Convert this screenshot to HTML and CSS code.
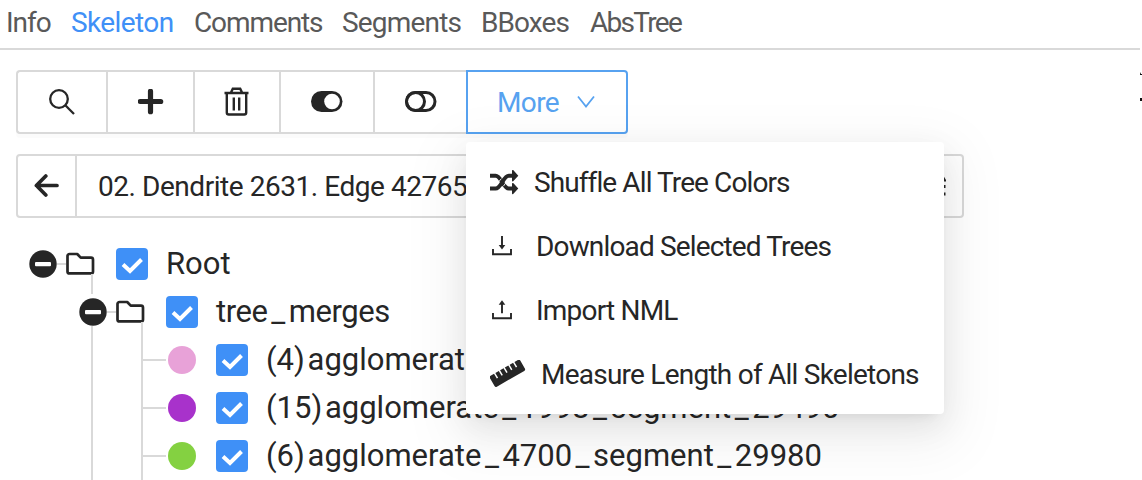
FILE: index.html
```
<!DOCTYPE html>
<html lang="en">
<head>
<meta charset="utf-8">
<title>Skeleton</title>
<link rel="stylesheet" href="styles.css">
</head>
<body>
<svg width="0" height="0" class="defs">
  <symbol id="check" viewBox="0 0 32 32"><path d="M7 16.5 14 23 25.5 11.5" fill="none" stroke="#fff" stroke-width="4"/></symbol>
  <symbol id="minus" viewBox="0 0 28 28"><circle cx="14" cy="14" r="13.7" fill="#262626"/><rect x="6" y="12" width="16" height="4.2" rx="1" fill="#fff"/></symbol>
  <symbol id="folder" viewBox="0 0 30 24"><path d="M3.5 2H11.2L14.7 5.6H25a2 2 0 0 1 2 2V19.4a2 2 0 0 1-2 2H3.5a2 2 0 0 1-2-2V4a2 2 0 0 1 2-2Z" fill="#fff" stroke="#262626" stroke-width="2.7" stroke-linejoin="round"/></symbol>
</svg>
<nav class="tabs">
  <a class="tab info">Info</a>
  <a class="tab skeleton">Skeleton</a>
  <a class="tab comments">Comments</a>
  <a class="tab segments">Segments</a>
  <a class="tab bboxes">BBoxes</a>
  <a class="tab abstree">AbsTree</a>
</nav>
<main class="panel">
  <div class="toolbar">
    <button class="btn search"><svg width="28" height="28" viewBox="0 0 28 28" fill="none" stroke="#262626" stroke-width="2.3"><circle cx="11" cy="11" r="8.8"/><path d="M17.3 17.3 26 26"/></svg></button>
    <button class="btn add"><svg width="26" height="26" viewBox="0 0 26 26"><path d="M12.5 2.3V22.7M2.3 12.5H22.7" stroke="#262626" stroke-width="5.2" stroke-linecap="round"/></svg></button>
    <button class="btn trash"><svg width="26" height="30" viewBox="0 0 26 30" fill="none" stroke="#262626" stroke-width="2.4"><path d="M.5 6H24.5M2.8 6V25.5a2 2 0 0 0 2 2H20.2a2 2 0 0 0 2-2V6M7 5.5 8.8 1.8H16.2L18 5.5M9.8 10.5V23.5M15.2 10.5V23.5"/></svg></button>
    <button class="btn on"><svg width="32" height="22" viewBox="0 0 32 22"><rect x="0" y="0" width="31.5" height="21" rx="10.5" fill="#262626"/><circle cx="21" cy="10.5" r="7.8" fill="#fff"/></svg></button>
    <button class="btn off"><svg width="32" height="22" viewBox="0 0 32 22" fill="none" stroke="#262626" stroke-width="3"><rect x="1.5" y="1.5" width="28.5" height="18" rx="9"/><circle cx="10.5" cy="10.5" r="9"/></svg></button>
    <div class="dropdown">
      <button class="btn more"><span class="more-label">More</span><svg width="18" height="14" viewBox="0 0 18 14"><path d="M1 1.5 9 11.5 17 1.5" fill="none" stroke="#57a2f0" stroke-width="1.8"/></svg></button>
      <div class="menu">
        <div class="item"><svg class="ico-shuffle" width="30" height="28" viewBox="0 0 30 28"><path d="M0 7.8H5.6C11 7.8 13.4 20.6 18.8 20.6H23M0 20.6H5.6C11 20.6 13.4 7.8 18.8 7.8H23" fill="none" stroke="#262626" stroke-width="4"/><path d="M8.3 14.2 11.4 10.6M13.4 18.2 16 14.6" stroke="#fff" stroke-width="0.9"/><path d="M22 2.6a.8.8 0 0 1 1.2-.5L28.3 7.8 23.2 13.2a.8.8 0 0 1-1.2-.5ZM22 15.6a.8.8 0 0 1 1.2-.5L28.3 20.6 23.2 26a.8.8 0 0 1-1.2-.5Z" fill="#262626"/></svg><span class="shuffle">Shuffle All Tree Colors</span></div>
        <div class="item"><svg class="ico-load" width="20" height="20" viewBox="0 0 20 20"><path d="M1 13V18.2H19V13M10 0V10" fill="none" stroke="#262626" stroke-width="1.9"/><path d="M6.7 9H13.3L10 13.5Z" fill="#262626"/></svg><span class="download">Download Selected Trees</span></div>
        <div class="item"><svg class="ico-load" width="20" height="20" viewBox="0 0 20 20"><path d="M1 13V18.2H19V13M10 13.2V3.5" fill="none" stroke="#262626" stroke-width="1.9"/><path d="M6.7 4.8H13.3L10 .3Z" fill="#262626"/></svg><span class="import">Import NML</span></div>
        <div class="item"><svg class="ico-ruler" width="36" height="28" viewBox="0 0 36 28"><g transform="rotate(-30 17.5 13.5)"><rect x="0" y="7" width="35" height="12.6" rx="1.7" fill="#262626"/><path d="M6.5 6V12.5M12 6V12.5M17.5 6V12.5M23 6V12.5M28.5 6V12.5" stroke="#fff" stroke-width="1.5"/></g></svg><span class="measure">Measure Length of All Skeletons</span></div>
      </div>
    </div>
  </div>
  <div class="group-bar">
    <div class="back"><svg width="26" height="24" viewBox="0 0 26 24"><path d="M11.8 2 2.4 11.5 11.8 21M2.5 11.5H23" fill="none" stroke="#262626" stroke-width="3.7" stroke-linecap="round" stroke-linejoin="round"/></svg></div>
    <div class="name">02. Dendrite 2631. Edge 42765</div>
    <svg class="end-mark" width="20" height="24" viewBox="0 0 20 24"><path d="M0 6 17.5 2 20 6V7.5H0ZM0 11H19.5V14H0ZM0 18.5H19.5V21.5H0Z" fill="#262626"/></svg>
  </div>
  <div class="tree">
    <div class="row root"><svg class="toggle"><use href="#minus"/></svg><i class="dash"></i><svg class="folder"><use href="#folder"/></svg><svg class="box"><use href="#check"/></svg><span class="label root-label">Root</span></div>
    <div class="branch">
      <div class="row"><svg class="toggle"><use href="#minus"/></svg><i class="dash"></i><svg class="folder"><use href="#folder"/></svg><svg class="box"><use href="#check"/></svg><span class="label group-label">tree<b class="sep">_</b>merges</span></div>
      <div class="leaves">
        <div class="row leaf"><i class="dot pink"></i><svg class="box"><use href="#check"/></svg><span class="label">(4) agglomerate<b class="sep">_</b></span></div>
        <div class="row leaf"><i class="dot purple"></i><svg class="box"><use href="#check"/></svg><span class="label">(15) agglomerate<b class="sep">_</b>1998<b class="sep">_</b>segment<b class="sep">_</b>29490</span></div>
        <div class="row leaf"><i class="dot green"></i><svg class="box"><use href="#check"/></svg><span class="label">(6) agglomerate<b class="sep">_</b>4700<b class="sep">_</b>segment<b class="sep">_</b>29980</span></div>
      </div>
    </div>
  </div>
</main>
<svg class="edge" width="2" height="32" viewBox="0 0 2 32"><path d="M0 2 1 0V2H2V3H0ZM0 26H2V29H0Z" fill="#111"/></svg>
</body>
</html>
```
FILE: styles.css
```
* { box-sizing: border-box; }
body { margin: 0; height: 480px; overflow: hidden; position: relative; background: #fff; color: #262626; font: 28px/1 Roboto, sans-serif; white-space: nowrap; }
svg { display: block; flex: none; }
.defs { position: absolute; }

.tabs { display: flex; height: 50px; margin-right: 2px; border-bottom: 2px solid #d9d9d9; color: #595959; padding: 8px 0 0 6px; line-height: 30px; }
.tab { flex: none; }
.info { width: 65px; letter-spacing: -1px; }
.skeleton { width: 123px; letter-spacing: -.6px; color: #3f90f7; }
.comments { width: 148px; letter-spacing: -1.1px; }
.segments { width: 139px; letter-spacing: -.8px; }
.bboxes { width: 109px; letter-spacing: -.9px; }
.abstree { letter-spacing: -1.7px; }

.panel { padding: 20px 0 0 16px; }
.toolbar { display: flex; height: 64px; }
.btn { display: flex; align-items: center; justify-content: center; height: 64px; margin: 0; padding: 0; border: 2px solid #d9d9d9; border-right: 0; background: #fff; font: inherit; box-shadow: 0 4px 0 rgba(0,0,0,.016); }
.search { width: 90px; border-radius: 4px 0 0 4px; }
.add { width: 87px; }
.trash { width: 86px; }
.on { width: 94px; }
.off { width: 93px; }
.dropdown { position: relative; }
.more { width: 162px; border: 2px solid #57a2f0; border-radius: 0 4px 4px 0; color: #57a2f0; gap: 18px; padding: 0 2px 0 0; }
.more-label { letter-spacing: -.6px; padding-top: 2px; }

.menu { position: absolute; left: 0; top: 72px; width: 478px; padding: 8px 0; border-radius: 4px; background: #fff; z-index: 2; box-shadow: 0 6px 12px -8px rgba(0,0,0,.12), 0 12px 32px rgba(0,0,0,.08), 0 18px 56px 16px rgba(0,0,0,.05); }
.item { display: flex; align-items: center; height: 64px; padding-left: 24px; }
.item span { padding-top: 2px; }
.ico-shuffle { margin-right: 14px; }
.ico-load { margin: 0 24px 0 2px; }
.ico-ruler { margin-right: 15px; }
.shuffle { letter-spacing: -.9px; }
.download { letter-spacing: -.85px; }
.import { letter-spacing: -.8px; }
.measure { letter-spacing: -.76px; }

.group-bar { display: flex; align-items: center; width: 948px; height: 64px; margin-top: 20px; border: 2px solid #d9d9d9; border-radius: 4px; }
.back { display: flex; align-items: center; justify-content: center; width: 59px; height: 60px; border-right: 2px solid #d9d9d9; }
.name { flex: 1; padding: 2px 0 0 21px; letter-spacing: -.45px; }
.end-mark { margin-right: 16px; }

.tree { padding: 22px 0 0 13px; font-size: 31px; }
.row { display: flex; align-items: center; height: 48px; }
.toggle { width: 28px; height: 28px; }
.dash { width: 9px; height: 2px; background: #d9d9d9; }
.folder { width: 30px; height: 24px; }
.box { width: 32px; height: 32px; border-radius: 4px; background: #3f90f7; margin: 0 18px 0 20px; }
.label { padding-bottom: 2px; letter-spacing: 0; word-spacing: -5px; }
.group-label { letter-spacing: -.4px; }
.branch { margin-left: 50px; position: relative; }
.branch::before { content: ""; position: absolute; left: 12px; top: -14px; height: 20px; width: 2px; background: #d9d9d9; }
.branch::after { content: ""; position: absolute; left: 12px; top: 38px; bottom: 0; width: 2px; background: #d9d9d9; }
.leaves { margin-left: 62px; position: relative; border-left: 2px solid #d9d9d9; }
.leaves::before { content: ""; position: absolute; left: -2px; top: -14px; height: 14px; width: 2px; background: #d9d9d9; }
.leaf::before { content: ""; width: 23px; height: 2px; background: #d9d9d9; margin-right: 2px; }
.dot { width: 28px; height: 28px; border-radius: 50%; }
.sep { display: inline-block; width: 21px; text-align: center; font-weight: 400; }
.pink { background: #e8a2d8; }
.purple { background: #a832cb; }
.green { background: #84d141; }
.edge { position: absolute; right: 0; top: 72px; }
```
